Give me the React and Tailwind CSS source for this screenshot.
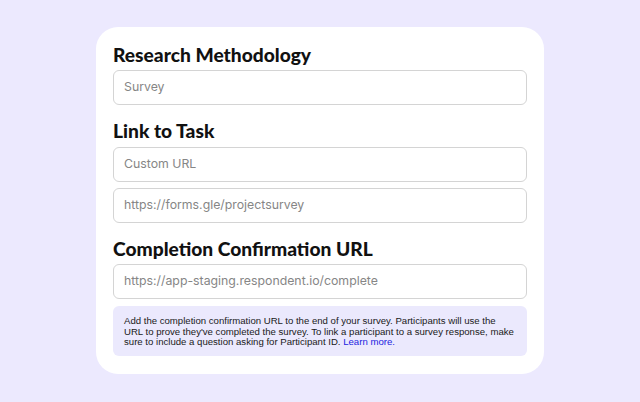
import React from 'react';

const Field = ({ value }) => (
  <div className="h-[35px] w-full rounded-[6px] border border-[#d4d4d4] bg-white px-[10px] flex items-center">
    <span className="text-[12.3px] text-[#868686]">{value}</span>
  </div>
);

const Heading = ({ children }) => (
  <h2 className="text-[19.2px] font-black leading-[24px] text-[#111] font-['Lato',sans-serif]">
    {children}
  </h2>
);

export default function App() {
  return (
    <div className="w-[640px] h-[402px] bg-[#ece9fe] pt-[27px] font-['Inter',sans-serif]">
      <div className="mx-auto w-[448px] h-[347px] rounded-[22px] bg-white px-[17px] pt-[16px]">
        {/* Research Methodology */}
        <Heading>Research Methodology</Heading>
        <div className="mt-[3px]">
          <Field value="Survey" />
        </div>

        {/* Link to Task */}
        <div className="mt-[14px]">
          <Heading>Link to Task</Heading>
        </div>
        <div className="mt-[4px] flex flex-col gap-[6px]">
          <Field value="Custom URL" />
          <Field value="https://forms.gle/projectsurvey" />
        </div>

        {/* Completion Confirmation URL */}
        <div className="mt-[14px]">
          <Heading>Completion Confirmation URL</Heading>
        </div>
        <div className="mt-[3px]">
          <Field value="https://app-staging.respondent.io/complete" />
        </div>

        {/* helper note */}
        <div className="mt-[7px] h-[50px] rounded-[6px] bg-[#ebe9fd] px-[11px] pt-[10px] whitespace-nowrap font-['Liberation_Sans',sans-serif] text-[9.6px] leading-[10.5px] text-[#1a1a1a]">
          Add the completion confirmation URL to the end of your survey. Participants will use the
          <br />
          URL to prove they've completed the survey. To link a participant to a survey response, make
          <br />
          sure to include a question asking for Participant ID. <span className="text-[#2323e0]">Learn more.</span>
        </div>
      </div>
    </div>
  );
}
